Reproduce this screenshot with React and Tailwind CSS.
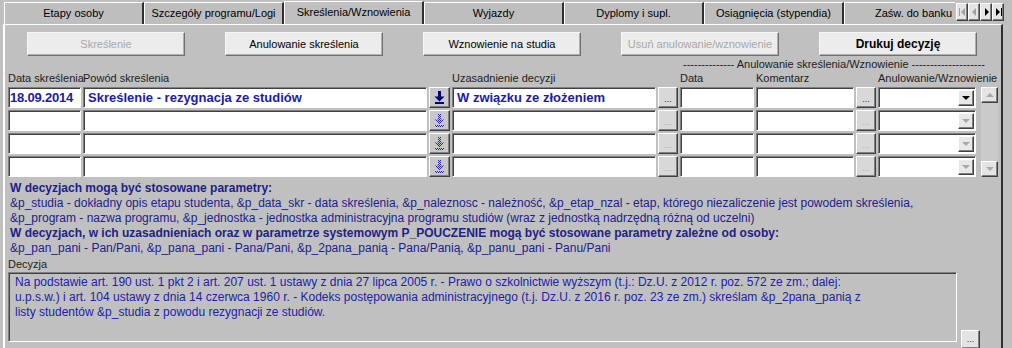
import React from 'react';

const tabs = [
  'Etapy osoby',
  'Szczegóły programu/Logi',
  'Skreślenia/Wznowienia',
  'Wyjazdy',
  'Dyplomy i supl.',
  'Osiągnięcia (stypendia)',
  'Zaśw. do banku',
];

const raised =
  'border border-t-white border-l-white border-r-[#404040] border-b-[#404040] shadow-[inset_-1px_-1px_0_#808080]';
const sunken =
  'border border-t-[#808080] border-l-[#808080] border-r-white border-b-white shadow-[inset_1px_1px_0_#404040]';
const cols = 'grid grid-cols-[73px_344px_21px_204px_20px_74px_98px_20px_98px] gap-x-[2px]';

const NavArrow = ({ kind, enabled }) => {
  const c = enabled ? '#000' : '#a0a0a0';
  return (
    <div className={`w-[12px] h-[18px] bg-[#e4e4e4] flex items-center justify-center ${raised}`}>
      <svg width="7" height="8" viewBox="0 0 7 8">
        {kind === 'first' && (
          <>
            <rect x="0" y="0" width="1" height="8" fill={c} />
            <polygon points="6,0 2,4 6,8" fill={c} />
          </>
        )}
        {kind === 'prev' && <polygon points="5,0 1,4 5,8" fill={c} />}
        {kind === 'next' && <polygon points="2,0 6,4 2,8" fill={c} />}
        {kind === 'last' && (
          <>
            <polygon points="1,0 5,4 1,8" fill={c} />
            <rect x="6" y="0" width="1" height="8" fill={c} />
          </>
        )}
      </svg>
    </div>
  );
};

const TopButton = ({ children, disabled, bold }) => (
  <button
    className={`w-[158px] h-[24px] whitespace-nowrap bg-[#ececec] border border-t-[#f8f8f8] border-l-[#f8f8f8] border-r-[#707070] border-b-[#707070] shadow-[inset_-1px_-1px_0_#b0b0b0] ${
      disabled ? 'text-[#a8a8a8]' : 'text-black'
    } ${bold ? 'font-bold text-[12px]' : 'text-[11px]'}`}
  >
    {children}
  </button>
);

const ArrowButton = ({ active, id }) => (
  <div className={`h-[21px] bg-[#c8c8c8] flex items-center justify-center ${raised}`}>
    <svg width="11" height="13" viewBox="0 0 11 13">
      {active ? (
        <g fill="#000080">
          <rect x="4" y="0" width="3" height="6" />
          <polygon points="0.5,5.5 10.5,5.5 5.5,10.5" />
          <rect x="1" y="11" width="9" height="2" />
        </g>
      ) : (
        <>
          <defs>
            <pattern id={id} width="2" height="2" patternUnits="userSpaceOnUse">
              <rect x="0" y="0" width="1" height="1" fill="#2a2aa0" />
              <rect x="1" y="1" width="1" height="1" fill="#2a2aa0" />
            </pattern>
          </defs>
          <g fill={`url(#${id})`}>
            <rect x="4" y="0" width="3" height="6" />
            <polygon points="0.5,5.5 10.5,5.5 5.5,10.5" />
            <rect x="1" y="11" width="9" height="2" />
          </g>
        </>
      )}
    </svg>
  </div>
);

const DotsButton = ({ active }) => (
  <div
    className={`h-[21px] bg-[#d8d8d8] flex items-end justify-center pb-[3px] text-[9px] leading-none ${raised} ${
      active ? 'text-[#303030]' : 'text-[#a8a8a8]'
    }`}
  >
    ...
  </div>
);

const Cell = ({ children, className = '' }) => (
  <div
    className={`h-[21px] bg-white flex items-center overflow-hidden whitespace-nowrap text-[13px] font-bold text-[#1c1ca0] ${sunken} ${className}`}
  >
    {children}
  </div>
);

const Dropdown = ({ active }) => (
  <div className={`h-[21px] bg-white flex items-center justify-end pr-[1px] ${sunken}`}>
    <div className={`w-[16px] h-[16px] bg-[#e8e8e8] flex items-center justify-center ${raised}`}>
      <svg width="8" height="4" viewBox="0 0 8 4">
        <polygon points="0,0 8,0 4,4" fill={active ? '#000' : '#a8a8a8'} />
      </svg>
    </div>
  </div>
);

const Scrollbar = () => (
  <div className="w-[17px] h-[90px] bg-[#cacaca] flex flex-col justify-between">
    <div className={`h-[16px] bg-[#e4e4e4] flex items-center justify-center ${raised}`}>
      <svg width="8" height="4" viewBox="0 0 8 4">
        <polygon points="0,4 8,4 4,0" fill="#a8a8a8" />
      </svg>
    </div>
    <div className={`h-[16px] bg-[#e4e4e4] flex items-center justify-center ${raised}`}>
      <svg width="8" height="4" viewBox="0 0 8 4">
        <polygon points="0,0 8,0 4,4" fill="#a8a8a8" />
      </svg>
    </div>
  </div>
);

export default function App() {
  const rows = [0, 1, 2, 3];
  return (
    <div className="w-[1012px] h-[348px] bg-[#c0c0c0] overflow-hidden font-['Liberation_Sans',Arial,sans-serif] text-black">
      {/* Tabs */}
      <div className="h-[24px] flex items-end">
        <div className="ml-[4px] w-[951px] h-[24px] flex items-end overflow-hidden">
          {tabs.map((t, i) => {
            const active = i === 2;
            return (
              <div
                key={t}
                className={`shrink-0 w-[140px] flex items-center justify-center text-[11px] border-t border-l border-t-white border-l-white border-r-2 border-r-[#303030] ${
                  active ? 'h-[24px] bg-[#c0c0c0] relative z-10 -mb-px pb-[2px]' : 'h-[22px] bg-[#bebebe]'
                }`}
              >
                {t}
              </div>
            );
          })}
        </div>
        <div className="flex self-start mt-[3px] ml-[1px]">
          <NavArrow kind="first" />
          <NavArrow kind="prev" />
          <NavArrow kind="next" enabled />
          <NavArrow kind="last" enabled />
        </div>
      </div>

      {/* Panel */}
      <div className="ml-[3px] w-[1000px] h-[324px] border-t border-t-white border-l-2 border-l-white border-r-2 border-r-[#303030] flex flex-col">
        {/* Buttons */}
        <div className="mt-[7px] ml-[22px] flex gap-[40px]">
          <TopButton disabled>Skreślenie</TopButton>
          <TopButton>Anulowanie skreślenia</TopButton>
          <TopButton>Wznowienie na studia</TopButton>
          <TopButton disabled>Usuń anulowanie/wznowienie</TopButton>
          <TopButton bold>Drukuj decyzję</TopButton>
        </div>

        {/* Group header */}
        <div className="h-[16px] ml-[678px] flex items-center text-[11px] whitespace-pre text-[#202020]">
          {'-------------- Anulowanie skreślenia/Wznowienie --------------------'}
        </div>

        {/* Column labels */}
        <div className={`${cols} h-[16px] ml-[3px] items-end pb-[2px] text-[11px] leading-[13px] whitespace-nowrap text-[#202020]`}>
          <div>Data skreślenia</div>
          <div>Powód skreślenia</div>
          <div />
          <div>Uzasadnienie decyzji</div>
          <div />
          <div>Data</div>
          <div>Komentarz</div>
          <div />
          <div className="overflow-visible">Anulowanie/Wznowienie</div>
        </div>

        {/* Rows */}
        <div className="ml-[3px] flex">
          <div className={`${cols} gap-y-[2px]`}>
            {rows.map((r) => (
              <React.Fragment key={r}>
                <Cell className="pl-px tracking-[-0.2px]">{r === 0 ? '18.09.2014' : ''}</Cell>
                <Cell className="pl-[4px]">{r === 0 ? 'Skreślenie - rezygnacja ze studiów' : ''}</Cell>
                <ArrowButton active={r === 0} id={`dots${r}`} />
                <Cell className="pl-[4px]">{r === 0 ? 'W związku ze złożeniem' : ''}</Cell>
                <DotsButton active={r === 0} />
                <Cell />
                <Cell />
                <DotsButton active={r === 0} />
                <Dropdown active={r === 0} />
              </React.Fragment>
            ))}
          </div>
          <div className="ml-[5px]">
            <Scrollbar />
          </div>
        </div>

        {/* Parameters info */}
        <div className="mt-[4px] ml-[5px] text-[12px] leading-[15px] text-[#20208a] whitespace-nowrap">
          <div className="font-bold">W decyzjach mogą być stosowane parametry:</div>
          <div>
            &amp;p_studia - dokładny opis etapu studenta, &amp;p_data_skr - data skreślenia, &amp;p_naleznosc - należność, &amp;p_etap_nzal - etap, którego niezaliczenie jest powodem skreślenia,
          </div>
          <div>
            &amp;p_program - nazwa programu, &amp;p_jednostka - jednostka administracyjna programu studiów (wraz z jednostką nadrzędną różną od uczelni)
          </div>
          <div className="font-bold">
            W decyzjach, w ich uzasadnieniach oraz w parametrze systemowym P_POUCZENIE mogą być stosowane parametry zależne od osoby:
          </div>
          <div>
            &amp;p_pan_pani - Pan/Pani, &amp;p_pana_pani - Pana/Pani, &amp;p_2pana_panią - Pana/Panią, &amp;p_panu_pani - Panu/Pani
          </div>
        </div>

        {/* Decision */}
        <div className="mt-[2px] ml-[3px] text-[11px] leading-[13px] text-[#202020]">Decyzja</div>
        <div className="mt-px ml-[3px] flex items-start">
          <div className={`w-[949px] h-[70px] bg-[#c0c0c0] px-[6px] pt-[2px] text-[12px] leading-[15px] text-[#2020a8] ${sunken}`}>
            Na podstawie art. 190 ust. 1 pkt 2 i art. 207 ust. 1 ustawy z dnia 27 lipca 2005 r. - Prawo o szkolnictwie wyższym (t.j.: Dz.U. z 2012 r. poz. 572 ze zm.; dalej:
            <br />
            u.p.s.w.) i art. 104 ustawy z dnia 14 czerwca 1960 r. - Kodeks postępowania administracyjnego (t.j. Dz.U. z 2016 r. poz. 23 ze zm.) skreślam &amp;p_2pana_panią z
            <br />
            listy studentów &amp;p_studia z powodu rezygnacji ze studiów.
          </div>
          <div
            className={`ml-[4px] mt-[58px] w-[19px] h-[19px] bg-[#e4e4e4] flex items-end justify-center pb-[4px] text-[9px] leading-none text-[#303030] ${raised}`}
          >
            ...
          </div>
        </div>
      </div>
    </div>
  );
}
